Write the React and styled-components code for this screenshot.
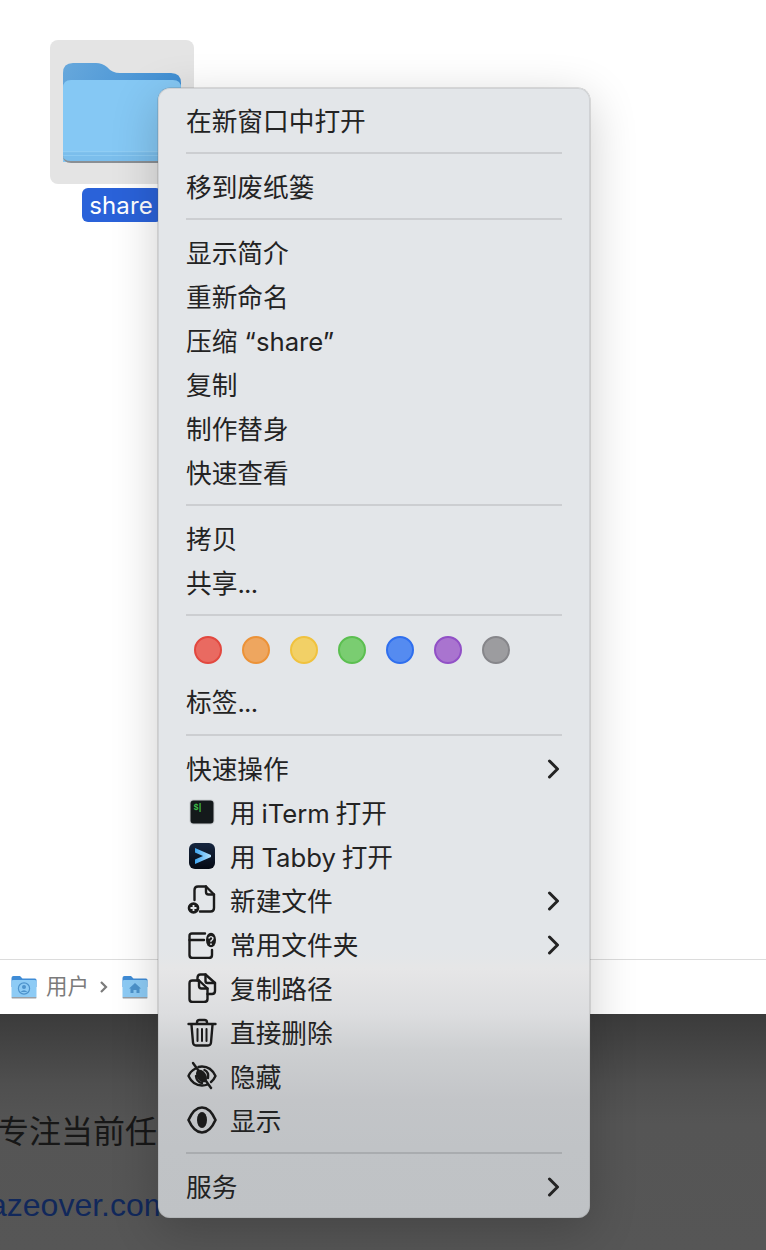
import React from "react";
import styled, { createGlobalStyle } from "styled-components";

const Global = createGlobalStyle`
  html, body { margin: 0; padding: 0; background: #fff; }
  body { width: 766px; height: 1250px; overflow: hidden; font-family: Inter, "Noto Sans CJK SC", sans-serif; }
  #root { width: 766px; height: 1250px; }
`;

const Screen = styled.div`
  position: relative;
  width: 766px;
  height: 1250px;
  overflow: hidden;
  display: flex;
  flex-direction: column;
`;
const Desktop = styled.div`
  height: 959px;
  padding: 40px 0 0 50px;
  box-sizing: border-box;
  background: #fff;
`;
const FileItem = styled.div`
  width: 144px;
  display: flex;
  flex-direction: column;
  align-items: center;
  gap: 4px;
`;
const Tile = styled.div`
  width: 144px;
  height: 144px;
  box-sizing: border-box;
  padding-top: 2px;
  border-radius: 8px;
  background: #e4e4e4;
  display: flex;
  align-items: center;
  justify-content: center;
`;
const FileLabel = styled.div`
  height: 34px;
  padding: 0 9px 0 7px;
  border-radius: 6px;
  background: #2a62d9;
  color: #fff;
  font-size: 24px;
  line-height: 35px;
  letter-spacing: 0.1px;
`;
const PathBar = styled.div`
  height: 55px;
  box-sizing: border-box;
  border-top: 1px solid #dcdcdc;
  background: #fff;
  padding-left: 11px;
  display: flex;
  align-items: center;
  color: #7b7b7b;
  font-size: 21.5px;
`;
const PathText = styled.span`
  margin-left: 9px;
  line-height: 1;
`;
const PathSep = styled.svg`
  width: 9px;
  height: 14px;
  margin: 0 14px 0 10px;
`;
const Dark = styled.div`
  flex: 1;
  background: linear-gradient(#3b3b3b 0, #4f4f4f 70px, #555 110px, #565656 100%);
  padding-top: 98px;
  font-size: 32px;
  line-height: 40px;
  white-space: nowrap;
`;
const DarkLine = styled.div`
  color: #171717;
  margin-left: -3px;
`;
const LinkLine = styled.div`
  color: #11285b;
  font-family: "Liberation Sans", "Noto Sans CJK SC", sans-serif;
  margin: 33px 0 0 -11px;
`;

const Menu = styled.div`
  position: absolute;
  left: 158px;
  top: 88px;
  width: 432px;
  height: 1130px;
  box-sizing: border-box;
  padding: 9px 28px 0;
  border-radius: 12px;
  background: linear-gradient(
    #e3e6e9 0,
    #e3e6e9 860px,
    #e4e6e8 871px,
    #e6e6e7 880px,
    #dcdddf 926px,
    #cdcfd1 962px,
    #c3c5c8 1012px,
    #c0c3c6 1060px,
    #bfc2c5 100%
  );
  box-shadow: inset 0 0 0 1px rgba(120, 120, 120, 0.18), 0 0 0 0.5px rgba(90, 90, 90, 0.35), 0 12px 48px rgba(0, 0, 0, 0.2);
  color: #232323;
  font-size: 25.7px;
`;
const Row = styled.div`
  height: 44px;
  display: flex;
  align-items: center;
  justify-content: space-between;
  white-space: nowrap;
`;
const RowMain = styled.div`
  display: flex;
  align-items: center;
`;
const RowLabel = styled.span`
  word-spacing: ${(p) => (p.$tight ? "-1.5px" : "0")};
`;
const Ellipsis = styled.span`
  letter-spacing: -0.7px;
`;
const IconSlot = styled.div`
  width: 44px;
  height: 44px;
  flex: none;
  display: flex;
  align-items: center;
  padding: 2px 0 0 1px;
  box-sizing: border-box;
`;
const Chevron = styled.svg`
  width: 13px;
  height: 20px;
  margin: 3px 2px 0 0;
`;
const Divider = styled.div`
  height: 2px;
  margin: ${(p) => (p.$loose ? "12px" : "11px")} 0 9px;
  background: ${(p) => (p.$dim ? "#a9acaf" : "#ccced1")};
`;
const TagRow = styled.div`
  height: 28px;
  margin: 20px 0 14px 8px;
  display: flex;
  gap: 20px;
`;
const Dot = styled.div`
  width: 28px;
  height: 28px;
  border-radius: 50%;
  box-sizing: border-box;
  background: ${(p) => p.$fill};
  border: 2px solid ${(p) => p.$edge};
`;

const ChevronRight = () => (
  <Chevron viewBox="0 0 13 20">
    <path d="M2.5 2 L10.5 10 L2.5 18" fill="none" stroke="#232323" strokeWidth="3" strokeLinecap="round" strokeLinejoin="round" />
  </Chevron>
);

const FolderArt = () => (
  <svg width="118" height="100" viewBox="0 0 118 100">
    <defs>
      <linearGradient id="fb" x1="0" y1="0" x2="1" y2="0.3">
        <stop offset="0" stopColor="#67a8dc" />
        <stop offset="1" stopColor="#3f8ed3" />
      </linearGradient>
    </defs>
    <path d="M0 10 Q0 0 10 0 L33 0 Q39 0 44 4 Q49 10 57 10 L108 10 Q118 10 118 20 L118 60 L0 60 Z" fill="url(#fb)" />
    <path d="M0 25 Q0 17 8 17 L110 17 Q118 17 118 25 L118 99 L0 99 Z" fill="#85c8f4" />
    <path d="M0 89 L118 89 L118 92 Q118 99 110 99 L8 99 Q0 99 0 92 Z" fill="#7bbeec" />
    <rect x="0" y="88" width="118" height="1.2" fill="#90cdf4" />
    <rect x="0" y="92" width="118" height="1" fill="#8ccaf2" />
    <path d="M0 92 Q0 98 8 98 L110 98 Q118 98 118 92 L118 93 Q118 100 110 100 L8 100 Q0 100 0 93 Z" fill="#8a8f94" />
  </svg>
);

const MiniFolder = ({ kind }) => (
  <svg width="26" height="24" viewBox="0 0 26 24">
    <path d="M0.5 3 Q0.5 1 2.5 1 L9 1 L11.5 3.5 L24 3.5 Q25.5 3.5 25.5 5 L25.5 12 L0.5 12 Z" fill="#3f8cd6" />
    <rect x="0.5" y="5" width="25" height="18" rx="1.5" fill="#8dcbf5" />
    <rect x="0.5" y="22" width="25" height="1.5" rx="0.7" fill="#9aa0a6" />
    {kind === "user" ? (
      <g fill="#4d93cc">
        <circle cx="13" cy="13.5" r="5.6" fill="none" stroke="#4d93cc" strokeWidth="1.2" />
        <circle cx="13" cy="12" r="2" />
        <path d="M9.6 17 Q13 13.5 16.4 17 Z" />
      </g>
    ) : (
      <path d="M13 8 L19 13.5 L17.5 13.5 L17.5 18 L14.5 18 L14.5 15 L11.5 15 L11.5 18 L8.5 18 L8.5 13.5 L7 13.5 Z" fill="#4d93cc" />
    )}
  </svg>
);

const G = ({ children }) => (
  <svg width="30" height="30" viewBox="0 0 30 30" fill="none" stroke="#1b1b1b" strokeWidth="2.4" strokeLinecap="round" strokeLinejoin="round">
    {children}
  </svg>
);

const ITerm = () => (
  <svg width="30" height="30" viewBox="0 0 30 30">
    <rect x="2.5" y="2.5" width="25" height="25" rx="4" fill="#c8cbce" />
    <rect x="3.5" y="3.5" width="23" height="23" rx="3" fill="#14191b" />
    <text x="6.5" y="12.5" fontSize="8.5" fill="#3fc24a" fontFamily="Liberation Mono, monospace" fontWeight="700" letterSpacing="-1">$|</text>
  </svg>
);
const Tabby = () => (
  <svg width="30" height="30" viewBox="0 0 30 30">
    <defs>
      <linearGradient id="tb" x1="0" y1="0" x2="0" y2="1">
        <stop offset="0" stopColor="#16263f" />
        <stop offset="1" stopColor="#050a14" />
      </linearGradient>
      <linearGradient id="tc" x1="0" y1="0" x2="1" y2="0">
        <stop offset="0" stopColor="#3fa6f2" />
        <stop offset="1" stopColor="#b4e2fd" />
      </linearGradient>
    </defs>
    <rect x="2" y="2" width="26" height="26" rx="6" fill="url(#tb)" />
    <path d="M8 7 L24 14 L24 16 L8 23 L8 18.5 L16 15 L8 11.5 Z" fill="url(#tc)" />
  </svg>
);
const NewFile = () => (
  <G>
    <path d="M7.5 15 V5 Q7.5 1.5 11 1.5 H19 L27 9.5 V23 Q27 26.5 23.5 26.5 H13" />
    <path d="M19 1.5 V7 Q19 9.5 21.5 9.5 H27" />
    <circle cx="6.5" cy="23" r="5.8" fill="#1b1b1b" stroke="none" />
    <path d="M6.5 20 V26 M3.5 23 H9.5" stroke="#e3e6e9" strokeWidth="1.8" strokeLinecap="butt" />
  </G>
);
const FolderQ = () => (
  <G>
    <path d="M18 4.5 H5 Q2.5 4.5 2.5 7 V26 Q2.5 29 5.5 29 H22 Q25 29 25 26 V21" />
    <path d="M2.5 11 H17" />
    <ellipse cx="24" cy="11" rx="5" ry="7.3" fill="#1b1b1b" stroke="none" />
    <path d="M22 9 Q24 6.2 26 9 Q26 11 24 11.8 V12.6" stroke="#e3e6e9" strokeWidth="1.4" />
    <circle cx="24" cy="15.2" r="0.9" fill="#e3e6e9" stroke="none" />
  </G>
);
const CopyPath = () => (
  <G>
    <path d="M12 7.5 H5.5 Q2.5 7.5 2.5 10.5 V26 Q2.5 29 5.5 29 H17 Q20.5 29 20.5 26 V15.5 Z" />
    <path d="M12 7.5 V13 Q12 15.5 14.5 15.5 H20.5" />
    <path d="M10.5 7.5 V5 Q10.5 1.5 13.5 1.5 H18.5 L28 10 V18 Q28 21 25 21 H20.5" />
    <path d="M18.5 1.5 V8 Q18.5 10 20.5 10 H28" />
  </G>
);
const Trash = () => (
  <G>
    <path d="M1.5 7 H28.5" />
    <path d="M10 6.5 V5.5 Q10 3 12.5 3 H17.5 Q20 3 20 5.5 V6.5" />
    <path d="M4.5 8 L6 25.5 Q6.3 28.5 9 28.5 H21 Q23.7 28.5 24 25.5 L25.5 8" />
    <path d="M10.5 12 V24 M15 12 V24 M19.5 12 V24" strokeWidth="2" />
  </G>
);
const EyeOff = () => (
  <G>
    <path d="M8.5 7.5 Q3 10.5 1.5 15 Q6 24.5 15 24.5 Q18 24.5 20.5 23.5 M11.5 6 Q13 5.5 15 5.5 Q24 5.5 28.5 15 Q27 18.5 24 21" />
    <path d="M6 2 L24 27" />
    <ellipse cx="14.5" cy="15" rx="4.6" ry="7" fill="#1b1b1b" stroke="none" transform="rotate(-35 14.5 15)" />
    <path d="M17.5 9 Q22 11 21 17" />
    <path d="M15 22 Q9.5 21 9 15" />
  </G>
);
const Eye = () => (
  <G>
    <path d="M1.5 15 C5.5 6 10 2.5 15 2.5 C20 2.5 24.5 6 28.5 15 C24.5 24 20 27.5 15 27.5 C10 27.5 5.5 24 1.5 15 Z" strokeWidth="2.6" />
    <ellipse cx="15" cy="15" rx="5" ry="8" fill="#1b1b1b" stroke="none" />
  </G>
);

const dots = [
  ["#e96a61", "#e2483f"],
  ["#eea65f", "#ec9237"],
  ["#f2d066", "#f0c23e"],
  ["#7acd71", "#5bbf50"],
  ["#558bf0", "#2f6fee"],
  ["#a974cf", "#9150c6"],
  ["#9c9c9f", "#86868a"],
];

const Item = ({ icon, children, sub }) => (
  <Row>
    <RowMain>
      {icon && <IconSlot>{icon}</IconSlot>}
      <RowLabel $tight={!!icon}>{children}</RowLabel>
    </RowMain>
    {sub && <ChevronRight />}
  </Row>
);

export default function App() {
  return (
    <>
      <Global />
      <Screen>
        <Desktop>
          <FileItem>
            <Tile>
              <FolderArt />
            </Tile>
            <FileLabel>share</FileLabel>
          </FileItem>
        </Desktop>
        <PathBar>
          <MiniFolder kind="user" />
          <PathText>用户</PathText>
          <PathSep viewBox="0 0 9 14">
            <path d="M2 2 L7 7 L2 12" fill="none" stroke="#7b7b7b" strokeWidth="2.2" />
          </PathSep>
          <MiniFolder kind="home" />
        </PathBar>
        <Dark>
          <DarkLine>专注当前任</DarkLine>
          <LinkLine>azeover.com/</LinkLine>
        </Dark>
        <Menu>
          <Item>在新窗口中打开</Item>
          <Divider />
          <Item>移到废纸篓</Item>
          <Divider />
          <Item>显示简介</Item>
          <Item>重新命名</Item>
          <Item>压缩 “share”</Item>
          <Item>复制</Item>
          <Item>制作替身</Item>
          <Item>快速查看</Item>
          <Divider />
          <Item>拷贝</Item>
          <Item>共享<Ellipsis>...</Ellipsis></Item>
          <Divider />
          <TagRow>
            {dots.map(([f, e]) => (
              <Dot key={f} $fill={f} $edge={e} />
            ))}
          </TagRow>
          <Item>标签<Ellipsis>...</Ellipsis></Item>
          <Divider $loose />
          <Item sub>快速操作</Item>
          <Item icon={<ITerm />}>用 iTerm 打开</Item>
          <Item icon={<Tabby />}>用 Tabby 打开</Item>
          <Item icon={<NewFile />} sub>新建文件</Item>
          <Item icon={<FolderQ />} sub>常用文件夹</Item>
          <Item icon={<CopyPath />}>复制路径</Item>
          <Item icon={<Trash />}>直接删除</Item>
          <Item icon={<EyeOff />}>隐藏</Item>
          <Item icon={<Eye />}>显示</Item>
          <Divider $dim />
          <Item sub>服务</Item>
        </Menu>
      </Screen>
    </>
  );
}
